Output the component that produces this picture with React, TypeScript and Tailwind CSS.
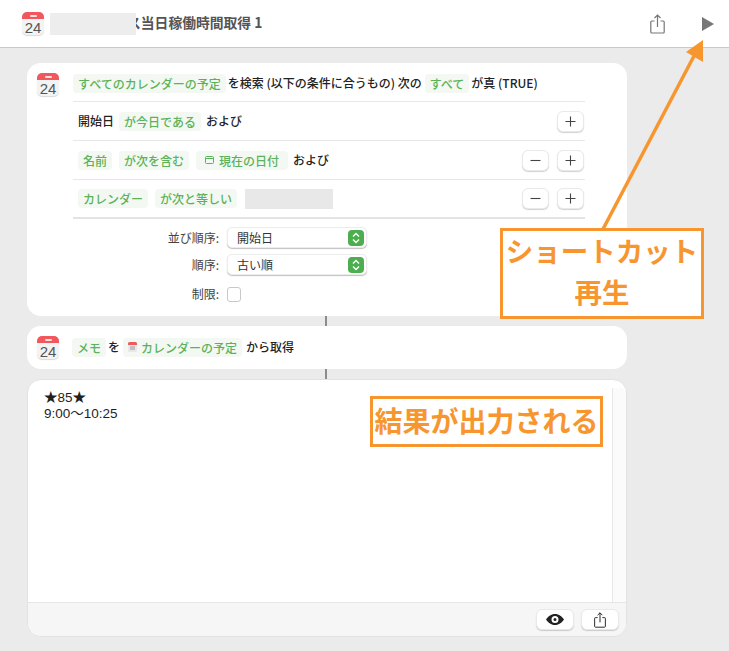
import { ReactNode } from "react";

const FONT = '"Noto Sans CJK JP", "Liberation Sans", sans-serif';

function CalendarIcon() {
  return (
    <div className="w-[22px] h-[23px] shrink-0 rounded-[5px] overflow-hidden bg-[#f3f3f3] shadow-[0_1px_1px_rgba(0,0,0,0.15)] flex flex-col">
      <div className="h-[7px] bg-[#f0585c] flex items-center justify-center">
        <div className="w-[7px] h-[2px] bg-white/80 rounded-sm" />
      </div>
      <div className="flex-1 flex items-center justify-center text-[15px] leading-none text-[#555] font-['Liberation_Sans',sans-serif]">
        24
      </div>
    </div>
  );
}

function Pill({ children, className = "" }: { children: ReactNode; className?: string }) {
  return (
    <span className={`h-[19px] px-[5px] rounded-[4px] bg-[#f3f9f2] text-[#5cb25a] text-[12px] font-medium leading-[19px] whitespace-nowrap flex items-center ${className}`}>
      {children}
    </span>
  );
}

function RoundButton({ children, wide = false }: { children: ReactNode; wide?: boolean }) {
  return (
    <div className={`${wide ? "w-[38px]" : "w-[27px]"} h-[21px] rounded-[6px] bg-white border border-[#e9e9e9] shadow-[0_1px_1px_rgba(0,0,0,0.18)] flex items-center justify-center text-[#444]`}>
      {children}
    </div>
  );
}

function PlusIcon() {
  return (
    <svg width="11" height="11" viewBox="0 0 11 11" stroke="#444" strokeWidth="1.1">
      <path d="M5.5 0.5v10M0.5 5.5h10" />
    </svg>
  );
}

function MinusIcon() {
  return (
    <svg width="11" height="11" viewBox="0 0 11 11" stroke="#444" strokeWidth="1.1">
      <path d="M0.5 5.5h10" />
    </svg>
  );
}

function ShareIcon({ w, h, color }: { w: number; h: number; color: string }) {
  return (
    <svg width={w} height={h} viewBox="0 0 15 20" fill="none" stroke={color} strokeWidth="1.2">
      <path d="M4.5 7H1.8a1 1 0 0 0-1 1v10a1 1 0 0 0 1 1h11.4a1 1 0 0 0 1-1V8a1 1 0 0 0-1-1h-2.7" />
      <path d="M7.5 13V1M4.5 4l3-3 3 3" />
    </svg>
  );
}

function Row({ children, last = false, buttons = 0 }: { children: ReactNode; last?: boolean; buttons?: number }) {
  return (
    <div className={`h-[39px] pl-[5px] pr-[1px] flex items-center border-b ${last ? "border-b-2 border-[#e3e3e3]" : "border-[#e8e8e8]"}`}>
      <div className="flex items-center gap-[7px] text-[12px] font-medium text-[#222] flex-1">{children}</div>
      {buttons === 2 && (
        <div className="mr-[8px]">
          <RoundButton><MinusIcon /></RoundButton>
        </div>
      )}
      {buttons > 0 && <RoundButton><PlusIcon /></RoundButton>}
    </div>
  );
}

function SelectBox({ value }: { value: string }) {
  return (
    <div className="w-[140px] h-[21px] pl-[9px] pr-[2px] rounded-[5px] bg-white border border-[#ececec] shadow-[0_1px_1px_rgba(0,0,0,0.25)] flex items-center justify-between text-[12px] text-[#333]">
      <span>{value}</span>
      <div className="w-[16px] h-[16px] rounded-[4px] bg-[#4cae4f] flex items-center justify-center">
        <svg width="8" height="12" viewBox="0 0 8 12" fill="none" stroke="white" strokeWidth="1.4">
          <path d="M1 4.5 4 1.5l3 3M1 7.5l3 3 3-3" />
        </svg>
      </div>
    </div>
  );
}

function FormRow({ label, children, className = "" }: { label: string; children: ReactNode; className?: string }) {
  return (
    <div className={`flex items-center ${className}`}>
      <span className="w-[200px] pr-[8px] text-right text-[12px] text-[#444]">{label}</span>
      {children}
    </div>
  );
}

function Connector() {
  return <div className="w-[2px] h-[10px] ml-[298px] bg-[#8c8c8c]" />;
}

export default function App() {
  return (
    <div className="relative w-[729px] h-[651px] overflow-hidden bg-[#ebebeb]" style={{ fontFamily: FONT }}>
      {/* title bar */}
      <header className="h-[48px] bg-white border-b border-[#c9c9c9] flex items-center pl-[22px] pr-[15px]">
        <CalendarIcon />
        <div className="relative z-10 ml-[6px] w-[86px] h-[22px] bg-[#ededed]" />
        <h1 className="-ml-[9px] pb-[3px] text-[13.8px] font-semibold text-[#555] whitespace-nowrap">ス当日稼働時間取得 1</h1>
        <div className="ml-auto mr-[37px]">
          <ShareIcon w={15} h={20} color="#777" />
        </div>
        <svg width="12" height="14" viewBox="0 0 12 14" fill="#777">
          <path d="M0 0 12 7 0 14Z" />
        </svg>
      </header>

      <main className="pt-[15px] pl-[27px] w-[627px]">
        {/* find calendar events */}
        <section className="h-[253px] rounded-[14px] bg-white">
          <div className="flex pl-[10px] pr-[42px]">
            <div className="pt-[10px]"><CalendarIcon /></div>
            <div className="ml-[14px] flex-1">
              <div className="h-[39px] pt-[2px] pr-[1px] flex items-center border-b border-[#e8e8e8] text-[12px] font-medium text-[#222] whitespace-nowrap">
                <Pill className="px-[4px]">すべてのカレンダーの予定</Pill>
                <span className="ml-[2px]">を検索 (以下の条件に合うもの) 次の</span>
                <Pill className="ml-[3px]">すべて</Pill>
                <span className="ml-[2px]">が真 (TRUE)</span>
              </div>
              <Row buttons={1}>
                <span>開始日</span>
                <Pill className="-ml-[2px]">が今日である</Pill>
                <span className="-ml-[2px]">および</span>
              </Row>
              <Row buttons={2}>
                <Pill>名前</Pill>
                <Pill>が次を含む</Pill>
                <Pill className="px-[9px] gap-[5px]">
                  <svg width="9" height="8" viewBox="0 0 9 8" fill="none" stroke="#5cb25a" strokeWidth="1">
                    <rect x="0.5" y="0.5" width="8" height="7" rx="1" />
                    <path d="M0.5 2.500h8" />
                  </svg>
                  現在の日付
                </Pill>
                <span className="-ml-[2px]">および</span>
              </Row>
              <Row buttons={2} last>
                <Pill>カレンダー</Pill>
                <Pill>が次と等しい</Pill>
                <div className="ml-[1px] w-[88px] h-[20px] bg-[#e8e8e8]" />
              </Row>
              <div className="-ml-[46px] pt-[8px]">
                <FormRow label="並び順序:"><SelectBox value="開始日" /></FormRow>
                <FormRow label="順序:" className="mt-[6px]"><SelectBox value="古い順" /></FormRow>
                <FormRow label="制限:" className="mt-[10px]">
                  <div className="w-[14px] h-[15px] rounded-[3px] bg-white border border-[#c9c9c9]" />
                </FormRow>
              </div>
            </div>
          </div>
        </section>

        <Connector />

        {/* get notes */}
        <section className="h-[43px] rounded-[14px] bg-white flex items-center pl-[10px]">
          <CalendarIcon />
          <div className="ml-[13px] pb-[1px] flex items-center text-[12px] font-medium text-[#222] whitespace-nowrap">
            <Pill>メモ</Pill>
            <span className="ml-[2px]">を</span>
            <Pill className="ml-[3px] gap-[4px]">
              <svg width="9" height="10" viewBox="0 0 9 10">
                <rect width="9" height="10" rx="1.5" fill="#e8e8e8" />
                <path d="M0 1.5A1.5 1.5 0 0 1 1.5 0h6A1.5 1.5 0 0 1 9 1.5V3H0Z" fill="#ef5a5a" />
                <path d="M2 5h5M2 7h5" stroke="#999" strokeWidth="1" />
              </svg>
              カレンダーの予定
            </Pill>
            <span className="ml-[4px]">から取得</span>
          </div>
        </section>

        <Connector />

        {/* output */}
        <section className="h-[258px] rounded-[14px] bg-white border border-[#e2e2e2] overflow-hidden flex flex-col">
          <div className="flex-1 flex">
            <div className="flex-1 pl-[16px] pt-[10px] text-[13.5px] leading-[16px] text-[#1f1f1f] font-['Liberation_Sans','Noto_Sans_CJK_JP',sans-serif]">
              <p>★85★</p>
              <p>9:00～10:25</p>
            </div>
            <div className="w-[14px] mt-[8px] bg-[#fbfbfb] border-l border-[#e8e8e8]" />
          </div>
          <div className="h-[34px] bg-[#f6f6f6] border-t border-[#e6e6e6] flex items-center justify-end gap-[7px] pr-[7px]">
            <RoundButton wide>
              <svg width="18" height="11" viewBox="0 0 18 11">
                <path fillRule="evenodd" fill="#222" d="M9 0c4 0 7.2 2.6 9 5.5C16.2 8.4 13 11 9 11S1.800 8.400 0 5.500C1.800 2.600 5 0 9 0Zm0 2a3.500 3.500 0 1 0 0 7 3.500 3.500 0 0 0 0-7Zm0 2a1.500 1.500 0 1 1 0 3 1.500 1.500 0 0 1 0-3Z" />
              </svg>
            </RoundButton>
            <RoundButton wide>
              <ShareIcon w={12} h={16} color="#222" />
            </RoundButton>
          </div>
        </section>
      </main>

      {/* annotations on top of the screenshot */}
      <svg className="absolute left-0 top-0 pointer-events-none" width="729" height="651">
        <path d="M602 231 694 56" stroke="#f7962f" strokeWidth="3.500" fill="none" />
        <path d="M703 40 686 52 703 62Z" fill="#f7962f" />
      </svg>
      <div className="absolute left-[500px] top-[228px] w-[204px] h-[91px] bg-white border-[3px] border-[#f7962f] flex flex-col items-center text-[#f7962f] text-[27.500px] font-bold leading-[41px] whitespace-nowrap">
        <span className="-mt-[1px]">ショートカット</span>
        <span>再生</span>
      </div>
      <div className="absolute left-[370px] top-[396px] w-[233px] h-[51px] pb-[4px] bg-white border-[3px] border-[#f7962f] flex items-center justify-center text-[#f7962f] text-[28px] font-semibold whitespace-nowrap">
        結果が出力される
      </div>
    </div>
  );
}
